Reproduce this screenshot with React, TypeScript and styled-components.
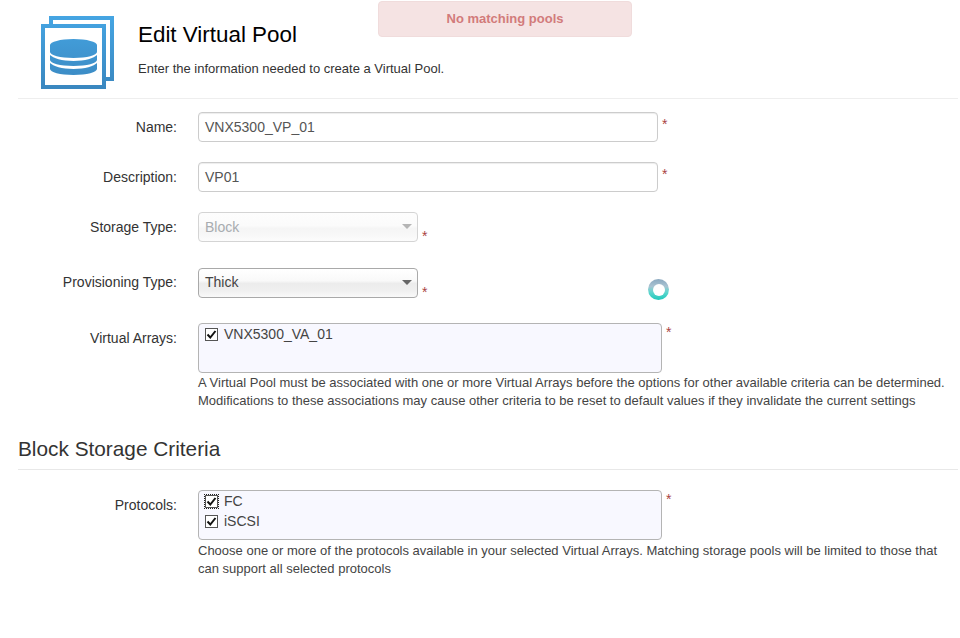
import React, { FC } from 'react';
import styled, { createGlobalStyle } from 'styled-components';

const GlobalStyle = createGlobalStyle`
  html, body {
    margin: 0;
    padding: 0;
    background: #fff;
    font-family: "Liberation Sans", Arial, sans-serif;
    color: #333;
  }
`;

const Page = styled.div`
  position: relative;
  width: 960px;
  height: 638px;
  overflow: hidden;
  padding: 0 2px 0 18px;
  box-sizing: border-box;
`;

const Toast = styled.div`
  position: absolute;
  left: 378px;
  top: 1px;
  width: 254px;
  height: 36px;
  box-sizing: border-box;
  display: flex;
  align-items: center;
  justify-content: center;
  padding-bottom: 2px;
  background: #f5e3e3;
  border: 1px solid #f0dcdc;
  border-radius: 4px;
  color: #d27b7b;
  font-size: 13px;
  font-weight: 700;
`;

const Header = styled.div`
  display: flex;
  height: 99px;
  padding: 16px 0 0 23px;
  box-sizing: border-box;
  border-bottom: 1px solid #eee;
`;

const HeaderText = styled.div`
  display: flex;
  flex-direction: column;
  margin-left: 24px;
`;

const Title = styled.h1`
  margin: 7px 0 0;
  font-size: 22.4px;
  line-height: 24px;
  font-weight: 400;
  color: #000;
`;

const Subtitle = styled.p`
  margin: 14px 0 0;
  font-size: 13px;
  line-height: 16px;
  color: #333;
`;

const Form = styled.div`
  display: flex;
  flex-direction: column;
  padding-top: 13px;
`;

const Row = styled.div<{ $height: number; $mb?: number; $mt?: number }>`
  display: grid;
  grid-template-columns: 159px auto;
  column-gap: 21px;
  align-items: start;
  height: ${(p) => p.$height}px;
  margin-top: ${(p) => p.$mt ?? 0}px;
  margin-bottom: ${(p) => p.$mb ?? 0}px;
`;

const Label = styled.label<{ $lineHeight?: number }>`
  text-align: right;
  font-size: 14px;
  line-height: ${(p) => p.$lineHeight ?? 30}px;
  color: #333;
`;

const Field = styled.div`
  display: flex;
  align-items: flex-start;
`;

const Stack = styled.div`
  display: flex;
  flex-direction: column;
`;

const TextBox = styled.div`
  width: 460px;
  height: 30px;
  box-sizing: border-box;
  border: 1px solid #ccc;
  border-radius: 4px;
  padding: 0 6px;
  font-size: 14px;
  line-height: 28px;
  color: #555;
  box-shadow: inset 0 1px 1px rgba(0, 0, 0, 0.075);
`;

const Select = styled.div<{ $disabled?: boolean }>`
  position: relative;
  width: 220px;
  height: 30px;
  box-sizing: border-box;
  border: 1px solid ${(p) => (p.$disabled ? '#d4d4d4' : '#a9a9a9')};
  border-radius: 4px;
  padding: 0 6px;
  font-size: 14px;
  line-height: ${(p) => (p.$disabled ? 28 : 27)}px;
  color: ${(p) => (p.$disabled ? '#a8acb0' : '#444')};
  background: ${(p) =>
    p.$disabled
      ? 'linear-gradient(#fdfdfd 0%, #fbfbfb 45%, #f5f5f5 55%, #f8f8f8 80%, #fcfcfc 100%)'
      : 'linear-gradient(#fff 0%, #f9f9f9 42%, #ececec 52%, #f0f0f0 78%, #f9f9f9 100%)'};
`;

const Caret = styled.span<{ $disabled?: boolean }>`
  position: absolute;
  right: 5px;
  top: 11px;
  width: 0;
  height: 0;
  border-left: 5px solid transparent;
  border-right: 5px solid transparent;
  border-top: 5px solid ${(p) => (p.$disabled ? '#b5b5b5' : '#666')};
`;

const Required = styled.span<{ $top: number }>`
  color: #a94442;
  font-size: 14px;
  line-height: 14px;
  margin-top: ${(p) => p.$top}px;
  margin-left: 4px;
`;

const CheckList = styled.div`
  width: 464px;
  height: 50px;
  box-sizing: border-box;
  border: 1px solid #b4b4b4;
  border-radius: 4px;
  background: #f8f8ff;
  padding: 0 6px;
`;

const CheckRow = styled.div`
  display: flex;
  align-items: center;
  height: 20px;
  font-size: 14px;
  color: #444;
`;

const CheckBox = styled.span<{ $focused?: boolean }>`
  width: 13px;
  height: 13px;
  box-sizing: border-box;
  margin-right: 6px;
  border: 1px solid #555;
  background: #fff;
  display: flex;
  align-items: center;
  justify-content: center;
  outline: ${(p) => (p.$focused ? '1px dotted #222' : 'none')};
`;

const Help = styled.p<{ $mt: number }>`
  margin: ${(p) => p.$mt}px 0 0;
  width: 756px;
  font-size: 13px;
  line-height: 18px;
  color: #444;
`;

const SectionTitle = styled.h2`
  margin: 0;
  height: 35px;
  padding-top: 8px;
  border-bottom: 1px solid #e8e8e8;
  font-size: 20.8px;
  line-height: 30px;
  font-weight: 400;
  color: #333;
`;

const Spinner = styled.div`
  position: absolute;
  left: 648px;
  top: 279px;
  width: 21px;
  height: 21px;
  border-radius: 50%;
  background: linear-gradient(#8aa8bf 0%, #a9c3d2 35%, #5fd6cf 62%, #1fc9bb 100%);
  display: flex;
  align-items: center;
  justify-content: center;

  &::after {
    content: '';
    width: 12px;
    height: 12px;
    border-radius: 50%;
    background: #fff;
  }
`;

const PoolIcon: FC = () => (
  <svg width="73" height="73" viewBox="0 0 73 73">
    <defs>
      <linearGradient id="blue" gradientUnits="userSpaceOnUse" x1="0" y1="0" x2="0" y2="73">
        <stop offset="0" stopColor="#45a5e3" />
        <stop offset="1" stopColor="#3a87bf" />
      </linearGradient>
    </defs>
    <g fill="url(#blue)">
      <path d="M8 0h65v65H65v-4h4V4H12v4H8z" />
      <path fillRule="evenodd" d="M0 8h65v65H0zM4 12v57h57V12z" />
      <path d="M9 29c0-3 10-6 23.500-6S56 26 56 29v7c0 3-10 6-23.500 6S9 39 9 36z" />
      <path d="M9 39c3 3 12 6 23.500 6S53 42 56 39v5c0 3-10 6-23.500 6S9 47 9 44z" />
      <path d="M9 47c3 3 12 6 23.500 6S53 50 56 47v6c0 3-10 6-23.500 6S9 56 9 53z" />
    </g>
  </svg>
);

const Check: FC = () => (
  <svg width="11" height="11" viewBox="0 0 11 11">
    <path d="M1.500 5.500 4.300 8.500 9.500 2" fill="none" stroke="#111" strokeWidth="2" />
  </svg>
);

const App: FC = () => (
  <Page>
    <GlobalStyle />
    <Toast>No matching pools</Toast>
    <Spinner />
    <Header>
      <PoolIcon />
      <HeaderText>
        <Title>Edit Virtual Pool</Title>
        <Subtitle>Enter the information needed to create a Virtual Pool.</Subtitle>
      </HeaderText>
    </Header>
    <Form>
      <Row $height={30} $mb={20}>
        <Label>Name:</Label>
        <Field>
          <TextBox>VNX5300_VP_01</TextBox>
          <Required $top={5}>*</Required>
        </Field>
      </Row>
      <Row $height={30} $mb={20}>
        <Label>Description:</Label>
        <Field>
          <TextBox>VP01</TextBox>
          <Required $top={5}>*</Required>
        </Field>
      </Row>
      <Row $height={30} $mb={26}>
        <Label>Storage Type:</Label>
        <Field>
          <Select $disabled>
            Block
            <Caret $disabled />
          </Select>
          <Required $top={17}>*</Required>
        </Field>
      </Row>
      <Row $height={30} $mb={25}>
        <Label $lineHeight={28}>Provisioning Type:</Label>
        <Field>
          <Select>
            Thick
            <Caret />
          </Select>
          <Required $top={17}>*</Required>
        </Field>
      </Row>
      <Row $height={86} $mb={17}>
        <Label>Virtual Arrays:</Label>
        <Stack>
          <Field>
            <CheckList>
              <CheckRow>
                <CheckBox><Check /></CheckBox>
                VNX5300_VA_01
              </CheckRow>
            </CheckList>
            <Required $top={2}>*</Required>
          </Field>
          <Help $mt={1}>
            A Virtual Pool must be associated with one or more Virtual Arrays before the options for other available criteria can be determined. Modifications to these associations may cause other criteria to be reset to default values if they invalidate the current settings
          </Help>
        </Stack>
      </Row>
      <SectionTitle>Block Storage Criteria</SectionTitle>
      <Row $height={86} $mt={20}>
        <Label>Protocols:</Label>
        <Stack>
          <Field>
            <CheckList>
              <CheckRow>
                <CheckBox $focused><Check /></CheckBox>
                FC
              </CheckRow>
              <CheckRow>
                <CheckBox><Check /></CheckBox>
                iSCSI
              </CheckRow>
            </CheckList>
            <Required $top={2}>*</Required>
          </Field>
          <Help $mt={2}>
            Choose one or more of the protocols available in your selected Virtual Arrays. Matching storage pools will be limited to those that can support all selected protocols
          </Help>
        </Stack>
      </Row>
    </Form>
  </Page>
);

export default App;
